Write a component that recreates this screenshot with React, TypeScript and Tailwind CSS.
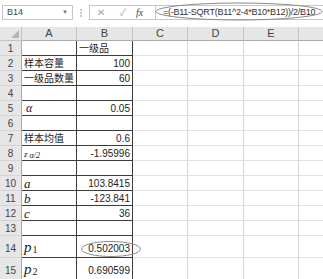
import React from 'react';

type Row = {
  n: number;
  h: string;
  a?: React.ReactNode;
  b?: React.ReactNode;
  bLeft?: boolean;
  ring?: boolean;
};

const serif = "font-['Liberation_Serif',serif] italic";

const rows: Row[] = [
  { n: 1, h: 'h-[15px]', b: '一级品', bLeft: true },
  { n: 2, h: 'h-[15px]', a: '样本容量', b: '100' },
  { n: 3, h: 'h-[15px]', a: '一级品数量', b: '60' },
  { n: 4, h: 'h-[15px]' },
  { n: 5, h: 'h-[15px]', a: <span className={`${serif} text-[12px] pl-[2px]`}>α</span>, b: '0.05' },
  { n: 6, h: 'h-[15px]' },
  { n: 7, h: 'h-[15px]', a: '样本均值', b: '0.6' },
  {
    n: 8,
    h: 'h-[15px]',
    a: (
      <span className={`${serif} text-[9px]`}>
        z<span className="text-[8px] relative top-[1px] pl-[2px]">α/2</span>
      </span>
    ),
    b: '-1.95996',
  },
  { n: 9, h: 'h-[15px]' },
  { n: 10, h: 'h-[15px]', a: <span className={`${serif} text-[13px]`}>a</span>, b: '103.8415' },
  { n: 11, h: 'h-[15px]', a: <span className={`${serif} text-[13px]`}>b</span>, b: '-123.841' },
  { n: 12, h: 'h-[15px]', a: <span className={`${serif} text-[13px]`}>c</span>, b: '36' },
  { n: 13, h: 'h-[15px]' },
  {
    n: 14,
    h: 'h-[22px]',
    a: (
      <span className={`${serif} text-[15px]`}>
        p<span className="not-italic text-[10px] relative top-[1px] pl-[1px]">1</span>
      </span>
    ),
    b: '0.502003',
    ring: true,
  },
  {
    n: 15,
    h: 'h-[22px]',
    a: (
      <span className={`${serif} text-[15px]`}>
        p<span className="not-italic text-[10px] relative top-[1px] pl-[1px]">2</span>
      </span>
    ),
    b: '0.690599',
  },
];

const cols = ['A', 'B', 'C', 'D', 'E'];

function FormulaBar() {
  return (
    <div className="relative h-[27px] bg-white flex items-start pt-[5px] pl-[2px]">
      <div className="w-[71px] h-[15px] border border-[#c6c6c6] bg-white flex items-center justify-between px-[4px] text-[9px] text-[#444]">
        <span>B14</span>
        <span className="text-[6px] text-[#777]">▼</span>
      </div>
      <div className="w-[16px] h-[15px] flex flex-col items-center justify-center gap-[1px]">
        <span className="w-[2px] h-[2px] bg-[#c8c8c8]" />
        <span className="w-[2px] h-[2px] bg-[#c8c8c8]" />
        <span className="w-[2px] h-[2px] bg-[#c8c8c8]" />
      </div>
      <div className="w-[66px] h-[15px] border border-[#c6c6c6] border-r-0 bg-white flex items-center text-[#a8a8a8]">
        <span className="w-[22px] text-center text-[10px]">✕</span>
        <span className="w-[22px] text-center text-[10px]">✓</span>
        <span className={`${serif} text-[10px] text-[#444] pl-[2px]`}>fx</span>
      </div>
      <div className="flex-1 h-[15px] border border-[#c6c6c6] border-r-0 bg-white flex items-center pl-[7px] text-[9px] text-[#333] tracking-[-0.25px] whitespace-nowrap overflow-hidden">
        =(-B11-SQRT(B11^2-4*B10*B12))/2/B10
      </div>
      <svg className="absolute left-[155px] top-[2px]" width="172" height="20">
        <ellipse cx="84" cy="9.5" rx="83" ry="8.5" fill="none" stroke="#8a8a8a" strokeWidth="1" />
      </svg>
    </div>
  );
}

export default function App() {
  return (
    <div className="w-[323px] h-[279px] overflow-hidden bg-white font-['Liberation_Sans','Noto_Sans_CJK_SC',sans-serif]">
      <FormulaBar />
      <div className="grid grid-cols-[22px_55px_56px_55px_56px_55px_24px]">
        {/* column headers */}
        <div className="h-[14px] bg-[#e6e6e6] border-r border-b border-[#c4c4c4] relative">
          <div className="absolute right-[2px] bottom-[2px] w-0 h-0 border-l-[8px] border-l-transparent border-b-[8px] border-b-[#b5b5b5]" />
        </div>
        {cols.map((c) => (
          <div
            key={c}
            className="h-[14px] bg-[#e6e6e6] border-r border-b border-[#c4c4c4] border-b-[#ababab] text-center text-[11px] leading-[13px] text-[#444]"
          >
            {c}
          </div>
        ))}
        <div className="h-[14px] bg-[#e6e6e6] border-b border-[#ababab]" />

        {rows.map((r) => {
          const tall = r.h === 'h-[22px]';
          const line = tall ? 'flex items-end leading-[15px] pb-[1px]' : 'leading-[15px]';
          return (
            <React.Fragment key={r.n}>
              <div
                className={`${r.h} ${line} justify-center bg-[#e6e6e6] border-r border-b border-r-[#ababab] border-b-[#d4d4d4] text-center text-[10px] text-[#444]`}
              >
                <span className="w-full text-center">{r.n}</span>
              </div>
              <div className={`${r.h} ${line} border-r border-b border-[#3c3c3c] pl-[2px] text-[10px] text-[#222] whitespace-nowrap overflow-hidden`}>
                {r.a}
              </div>
              <div
                className={`${r.h} ${line} relative border-r border-b border-[#3c3c3c] text-[10px] text-[#222] whitespace-nowrap ${
                  r.bLeft ? 'pl-[2px]' : 'justify-end text-right pr-[2px]'
                }`}
              >
                {r.b}
                {r.ring && (
                  <svg className="absolute left-[4px] top-[5px] overflow-visible" width="61" height="17">
                    <ellipse cx="30" cy="8" rx="29.5" ry="7.5" fill="none" stroke="#8a8a8a" strokeWidth="1" />
                  </svg>
                )}
              </div>
              <div className={`${r.h} border-r border-b border-r-[#d4d4d4] border-b-[#e1e1e1]`} />
              <div className={`${r.h} border-r border-b border-r-[#d4d4d4] border-b-[#e1e1e1]`} />
              <div className={`${r.h} border-r border-b border-r-[#d4d4d4] border-b-[#e1e1e1]`} />
              <div className={`${r.h} border-b border-b-[#e1e1e1]`} />
            </React.Fragment>
          );
        })}
      </div>
    </div>
  );
}
